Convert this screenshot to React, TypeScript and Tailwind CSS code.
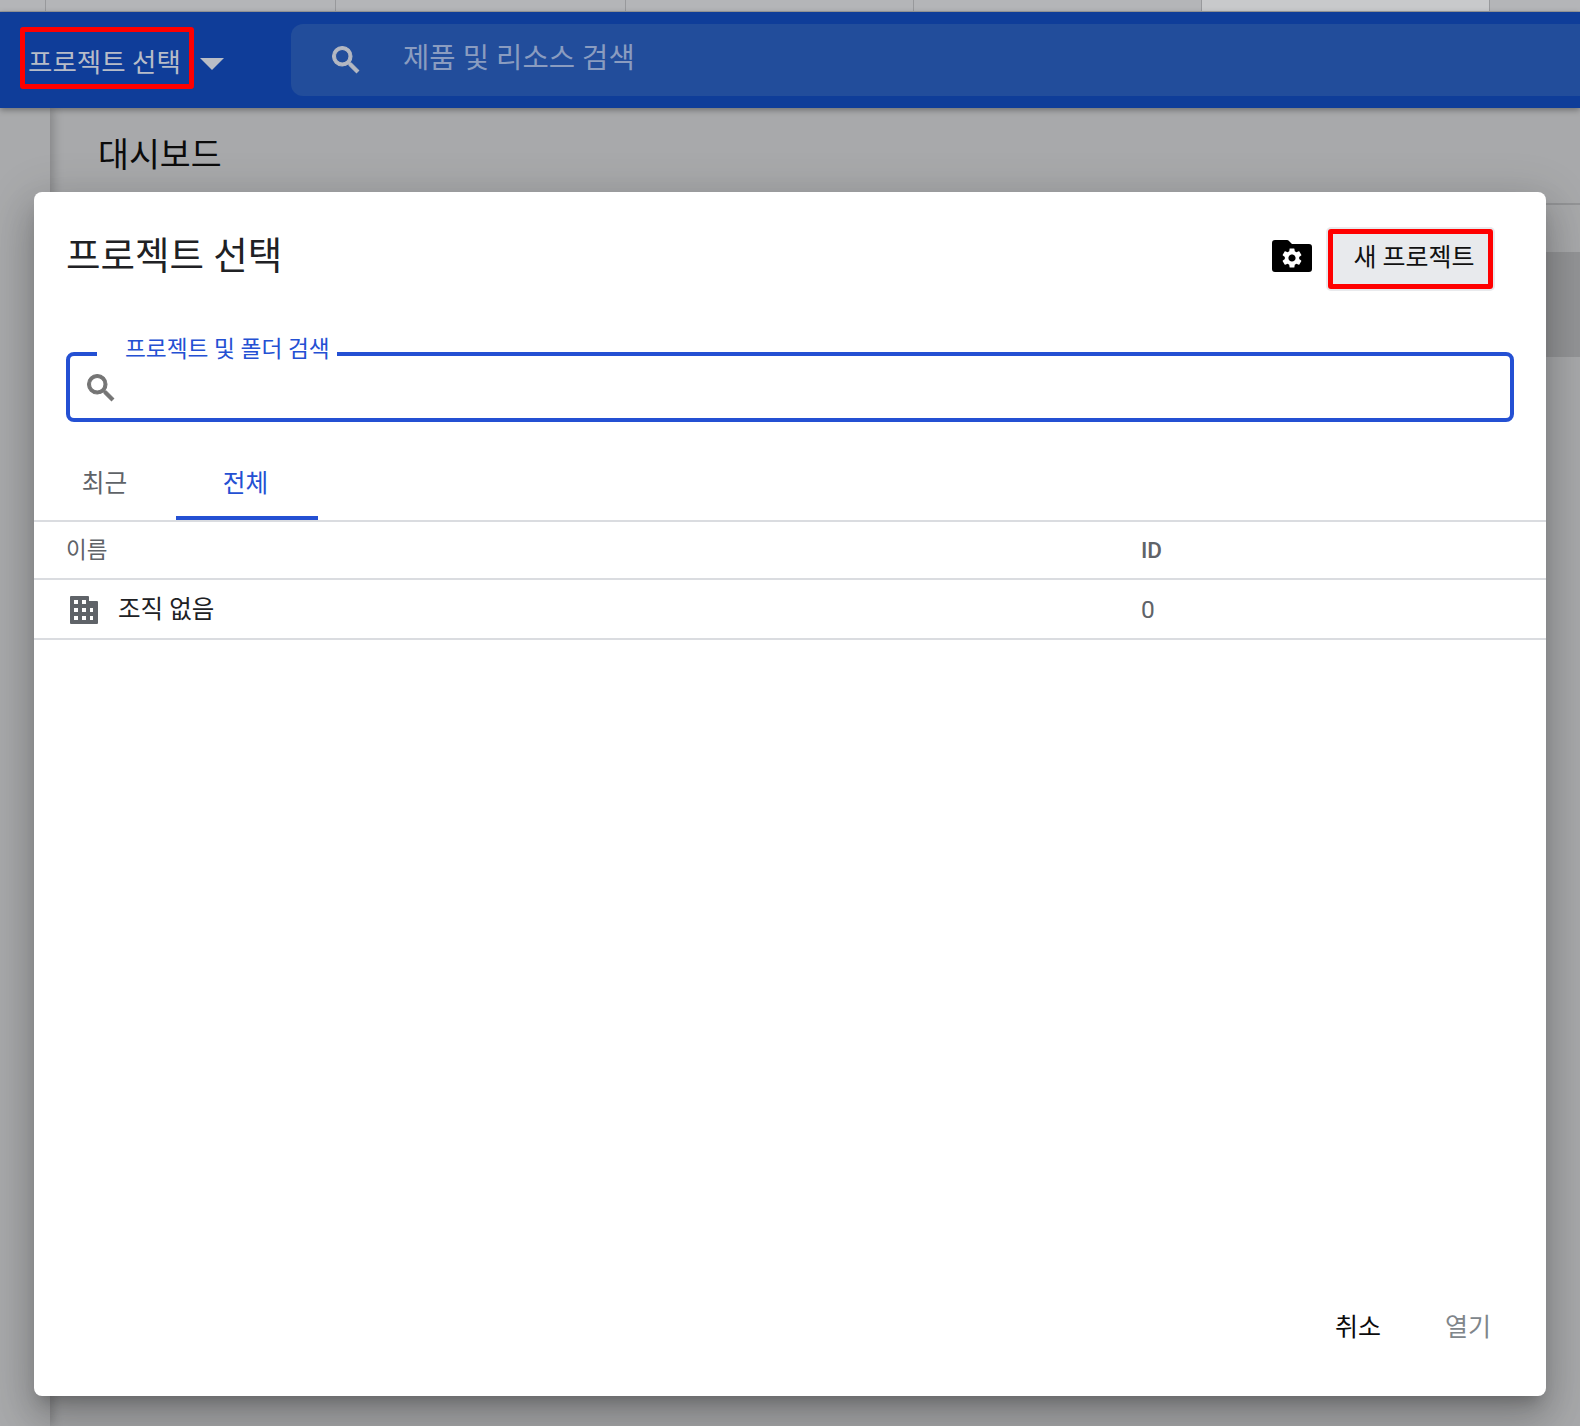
import React from 'react';

const SearchIcon = ({ className }: { className: string }) => (
  <svg viewBox="0 0 24 24" className={className} fill="currentColor" stroke="currentColor" strokeWidth="0.7">
    <path d="M15.5 14h-.79l-.28-.27A6.47 6.47 0 0 0 16 9.5 6.5 6.5 0 1 0 9.5 16c1.61 0 3.09-.59 4.23-1.57l.27.28v.79l5 4.99L20.49 19l-4.99-5zm-6 0C7.01 14 5 11.99 5 9.5S7.01 5 9.5 5 14 7.01 14 9.5 11.99 14 9.5 14z" />
  </svg>
);

const App = () => {
  return (
    <div className="relative w-[1580px] h-[1426px] overflow-hidden bg-[#a8a9ab] font-['Roboto','Noto_Sans_CJK_KR',sans-serif]">
      {/* page behind the dialog */}
      <div className="flex h-3 bg-[#b4b5b8] border-b border-[#9b9c9f]">
        <div className="w-[46px] border-r border-[#98999c]"></div>
        <div className="w-[290px] border-r border-[#98999c]"></div>
        <div className="w-[290px] border-r border-[#98999c]"></div>
        <div className="w-[288px] border-r border-[#98999c]"></div>
        <div className="w-[288px] border-r border-[#98999c]"></div>
        <div className="w-[288px] border-r border-[#98999c] bg-[#c8c9cb]"></div>
      </div>
      <header className="relative z-20 flex h-24 items-center bg-[#0f3d99] shadow-[0_2px_6px_rgba(0,0,0,0.35)]">
        <div className="ml-5 -mt-[5px] flex h-[62px] w-[174px] items-center rounded-[3px] border-[5px] border-[#ff0000] pl-[3px] pt-[10px] text-[26.5px] text-[#b7bcc8] whitespace-nowrap">
          프로젝트 선택
        </div>
        <div className="ml-[6px] mt-[8px] h-0 w-0 border-x-[12px] border-t-[12px] border-x-transparent border-t-[#b9bdc6]"></div>
        <div className="ml-[67px] flex h-[72px] flex-1 items-center rounded-l-xl bg-[#224d9b]">
          <SearchIcon className="ml-[37px] h-9 w-9 text-[#b4b8c2]" />
          <span className="ml-[39px] -mt-[4px] text-[28.6px] text-[#8a9cc0]">제품 및 리소스 검색</span>
        </div>
      </header>
      <div className="flex h-[1318px]">
        <div className="relative z-10 w-[50px] bg-[#a9aaac] shadow-[3px_0_10px_rgba(0,0,0,0.22)]"></div>
        <main className="flex-1">
          <div className="h-[97px] border-b-2 border-[#939496] pl-[48px] pt-[26px]">
            <h1 className="text-[33.6px] leading-[44px] text-[#0b0b0b]">대시보드</h1>
          </div>
          <div className="mt-[47px] h-[105px] bg-[#949597]"></div>
        </main>
      </div>

      {/* dialog */}
      <section className="absolute z-30 left-[34px] top-[192px] flex h-[1204px] w-[1512px] flex-col rounded-lg bg-white shadow-[0_11px_15px_-7px_rgba(0,0,0,0.22),0_24px_38px_3px_rgba(0,0,0,0.16),0_9px_46px_8px_rgba(0,0,0,0.12)]">
        <div className="flex h-[160px] items-start px-8">
          <h2 className="mt-[39px] flex-1 text-[37.5px] leading-[50px] text-[#202124]">프로젝트 선택</h2>
          <svg viewBox="0 0 40 32" className="mt-[48px] h-8 w-10" fill="#000">
            <path d="M3 0h12a2 2 0 0 1 1.5.6L20 4h17a3 3 0 0 1 3 3v22a3 3 0 0 1-3 3H3a3 3 0 0 1-3-3V3a3 3 0 0 1 3-3z" />
            <path
              fill="#fff"
              transform="translate(8 6)"
              d="M19.14 12.94c.04-.3.06-.61.06-.94 0-.32-.02-.64-.07-.94l2.03-1.58a.49.49 0 0 0 .12-.61l-1.92-3.32a.488.488 0 0 0-.59-.22l-2.39.96c-.5-.38-1.03-.7-1.62-.94l-.36-2.54a.484.484 0 0 0-.48-.41h-3.84c-.24 0-.43.17-.47.41l-.36 2.54c-.59.24-1.13.57-1.62.94l-2.39-.96c-.22-.08-.47 0-.59.22L2.74 8.87c-.12.21-.08.47.12.61l2.03 1.58c-.05.3-.09.63-.09.94s.02.64.07.94l-2.03 1.58a.49.49 0 0 0-.12.61l1.92 3.32c.12.22.37.29.59.22l2.39-.96c.5.38 1.03.7 1.62.94l.36 2.54c.05.24.24.41.48.41h3.84c.24 0 .44-.17.47-.41l.36-2.54c.59-.24 1.13-.56 1.62-.94l2.39.96c.22.08.47 0 .59-.22l1.92-3.32c.12-.22.07-.47-.12-.61l-2.01-1.58zM12 15.6c-1.98 0-3.6-1.62-3.6-3.6s1.62-3.6 3.6-3.6 3.6 1.62 3.6 3.6-1.62 3.6-3.6 3.6z"
            />
          </svg>
          <button className="ml-[16px] mr-[21px] mt-[37px] flex h-[60px] w-[165px] items-center justify-center rounded-[3px] border-[5px] border-[#ff0000] bg-[#e8eaed] pb-[2px] pl-[7px] text-[25px] text-[#111] shadow-[0_0_0_2px_#e8eaed]">
            새 프로젝트
          </button>
        </div>

        <div className="relative mx-8 h-[70px] rounded-lg border-4 border-[#2450d3]">
          <span className="absolute -top-[22px] left-[27px] bg-white pl-[28px] pr-[7px] text-[22.7px] leading-[32px] text-[#2450d3] whitespace-nowrap">프로젝트 및 폴더 검색</span>
          <SearchIcon className="ml-[13px] mt-[14px] h-9 w-9 text-[#757575]" />
        </div>

        <div className="mt-[30px] flex h-[70px] border-b-2 border-[#dadce0] pl-[15px]">
          <div className="flex w-[127px] items-center justify-center pb-1 pr-[16px] text-[24.7px] text-[#5f6368]">최근</div>
          <div className="flex w-[142px] items-center justify-center border-b-[4px] border-[#2450d3] pb-[1px] pr-[3px] text-[24.7px] text-[#2450d3]">전체</div>
        </div>

        <div className="flex h-[58px] items-center border-b-2 border-[#dadce0] pl-8 pt-[2px] text-[22.5px] text-[#5f6368]">
          <div className="w-[1075px]">이름</div>
          <div className="font-medium">ID</div>
        </div>
        <div className="flex h-[60px] items-center border-b-2 border-[#dadce0] pl-8 text-[24.5px]">
          <div className="flex w-[1075px] items-center text-[#202124]">
            <svg viewBox="0 0 28 28" className="ml-[4px] mt-[1px] h-7 w-7" fill="#5f6368">
              <path d="M1 0h17a1 1 0 0 1 1 1v4h8a1 1 0 0 1 1 1v21a1 1 0 0 1-1 1H1a1 1 0 0 1-1-1V1a1 1 0 0 1 1-1z" />
              <path fill="#fff" d="M4 4h4v4H4zM12 4h4v4h-4zM4 12h4v4H4zM12 12h4v4h-4zM20 12h3v4h-3zM4 20h4v4H4zM12 20h4v4h-4zM20 20h3v4h-3z" />
            </svg>
            <span className="ml-[20px] mt-[2px]">조직 없음</span>
          </div>
          <div className="mt-[2px] text-[#5f6368]">0</div>
        </div>

        <div className="mt-auto flex justify-end pb-[36px] pr-[55px] text-[25px] leading-[64px]">
          <span className="text-[#0b0b0b]">취소</span>
          <span className="ml-[64px] text-[#80868b]">열기</span>
        </div>
      </section>
    </div>
  );
};

export default App;
